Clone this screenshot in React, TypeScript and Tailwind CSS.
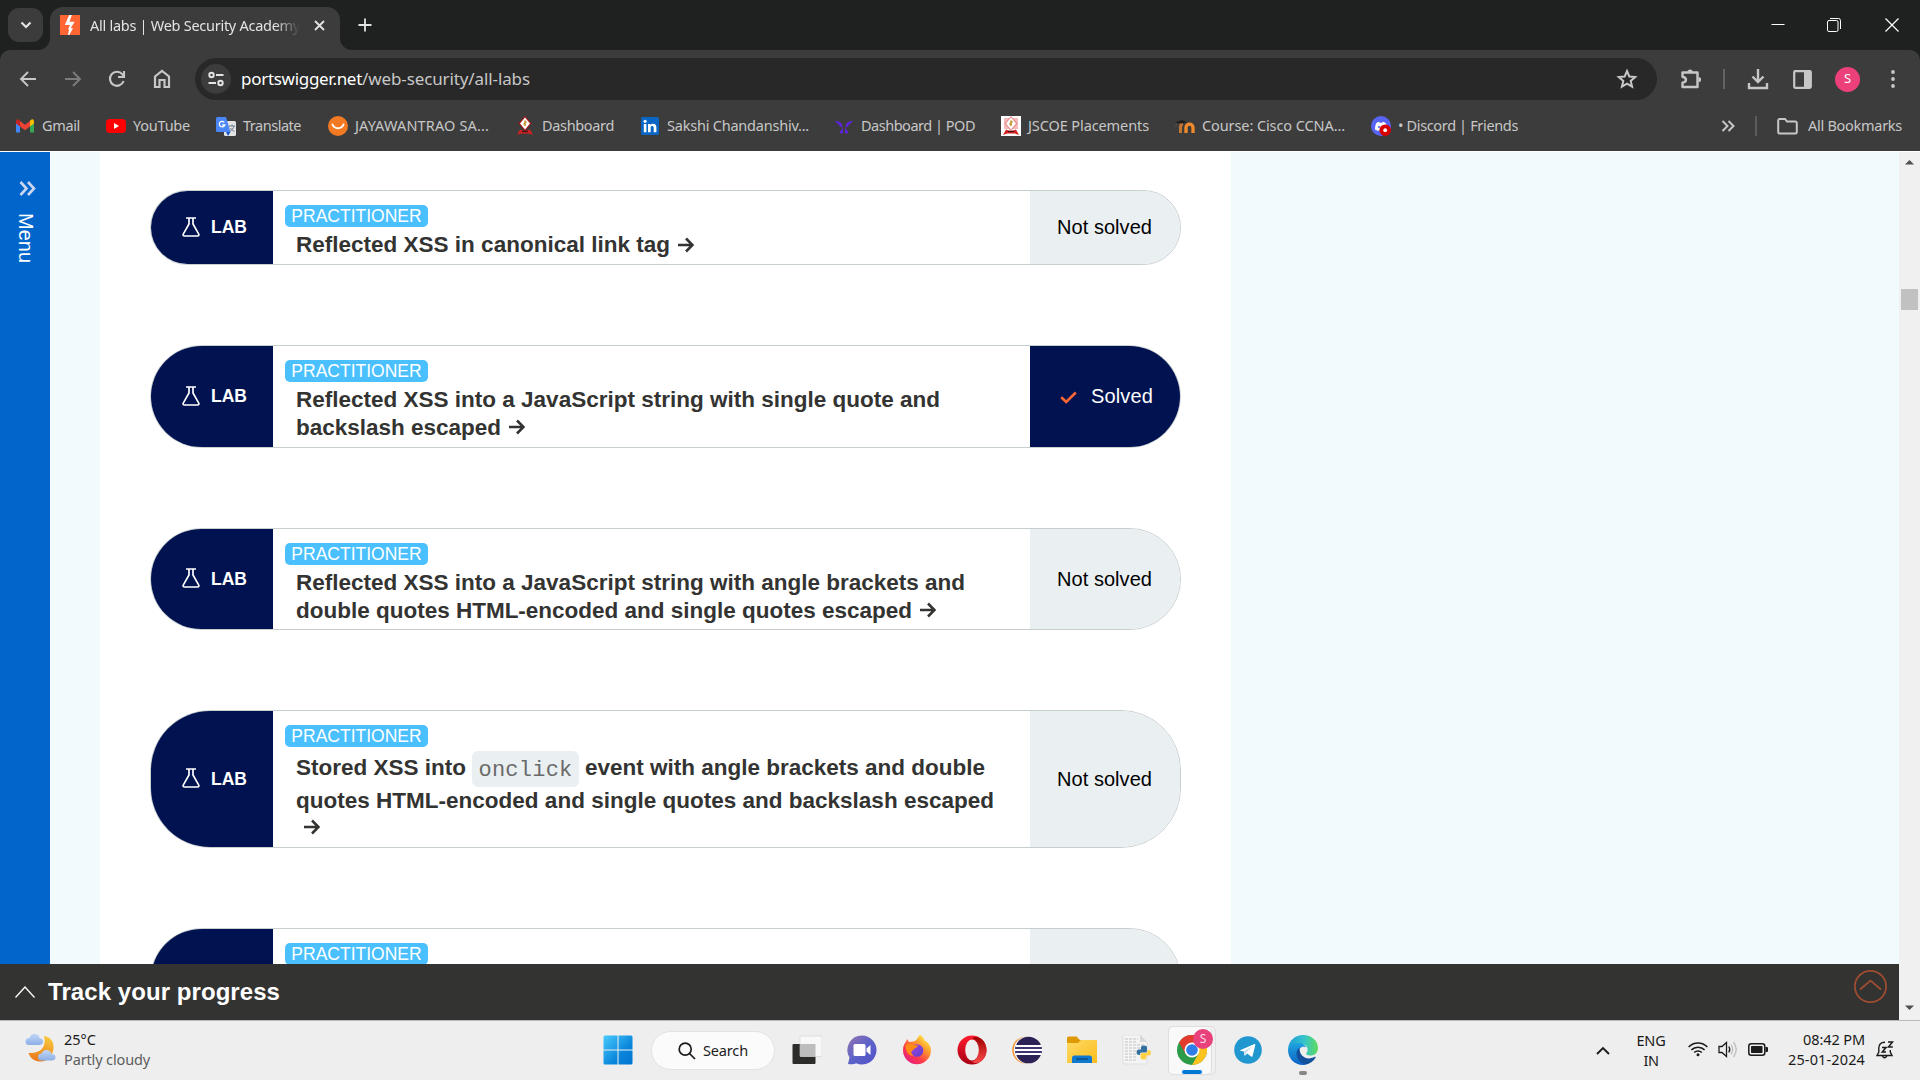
import React, { useLayoutEffect, useRef, useState } from "react";

const UI = "font-['Noto_Sans','Open_Sans',sans-serif]";
const ARIAL = "font-['Liberation_Sans',Arial,sans-serif]";

/** A single line of text whose tracking is adjusted to fill a given width. */
function Fit({ w, className = "", children }: { w: number; className?: string; children: string }) {
  const ref = useRef<HTMLSpanElement>(null);
  const [ls, setLs] = useState(0);
  useLayoutEffect(() => {
    const el = ref.current;
    if (!el) return;
    const natural = el.getBoundingClientRect().width;
    setLs((w - natural) / children.length);
  }, [w, children]);
  return (
    <span ref={ref} className={"inline-block shrink-0 whitespace-nowrap " + className} style={{ letterSpacing: ls + "px" }}>
      {children}
    </span>
  );
}

const Cell = ({ className = "", children }: { className?: string; children?: React.ReactNode }) => (
  <div className={"flex shrink-0 items-center justify-center " + className}>{children}</div>
);

function TabStrip() {
  return (
    <div className="flex h-[50px] bg-[#1f2120]">
      <Cell className="mt-2 ml-2 h-[34px] w-[35px] rounded-[11px] bg-[#3c3c3c]">
        <svg width="12" height="12" viewBox="0 0 12 12" fill="none" stroke="#e3e3e3" strokeWidth="2.2"><path d="M1.5 3.5 6 8l4.5-4.5" /></svg>
      </Cell>
      <div className="relative mt-[7px] ml-[7px] flex h-[43px] w-[290px] items-center rounded-t-[13px] bg-[#3c3c3c] pb-[7px] pl-[10px]">
        <svg className="absolute bottom-0 -left-3" width="12" height="12" viewBox="0 0 12 12" fill="#3c3c3c"><path d="M12 0v12H0A12 12 0 0 0 12 0Z" /></svg>
        <svg className="absolute -right-3 bottom-0" width="12" height="12" viewBox="0 0 12 12" fill="#3c3c3c"><path d="M0 0v12h12A12 12 0 0 1 0 0Z" /></svg>
        <svg width="20" height="20" viewBox="0 0 20 20"><rect width="20" height="20" fill="#ff6633" /><path d="M9.2 0h2.6L9.5 6.8h5.2L10.8 13l2.2.2L9.3 20H7.9l1.3-5.6H8l2-4.4H4.8Z" fill="#fff" /></svg>
        <div className="ml-[10px] w-[210px] overflow-hidden [mask-image:linear-gradient(90deg,#000_88%,transparent_100%)]">
          <Fit w={210} className="text-[14.5px] leading-[22px] text-[#e3e3e3]">All labs | Web Security Academy</Fit>
        </div>
        <svg className="ml-[14px]" width="11" height="11" viewBox="0 0 11 11" stroke="#e3e3e3" strokeWidth="1.800"><path d="m1 1 9 9M10 1l-9 9" /></svg>
      </div>
      <Cell className="w-[50px]">
        <svg width="14" height="14" viewBox="0 0 14 14" stroke="#e3e3e3" strokeWidth="1.800"><path d="M7 .5v13M.5 7h13" /></svg>
      </Cell>
      <div className="flex-1" />
      <Cell className="w-[57px]"><svg width="14" height="14" viewBox="0 0 14 14" stroke="#fff"><path d="M.5 6.5h13" /></svg></Cell>
      <Cell className="w-[57px] pr-px">
        <svg width="14" height="14" viewBox="0 0 14 14" fill="none" stroke="#fff"><rect x=".5" y="2.5" width="10.5" height="11" rx="1.5" /><path d="M3 .5h8.5a2 2 0 0 1 2 2v8.5" /></svg>
      </Cell>
      <Cell className="w-[57px]"><svg width="14" height="14" viewBox="0 0 14 14" stroke="#fff" strokeWidth="1.2"><path d="m.5.5 13 13M13.5.5l-13 13" /></svg></Cell>
    </div>
  );
}

function Toolbar() {
  return (
    <div className="bg-[#1f2120]">
      <div className="flex h-[58px] items-center rounded-t-[10px] bg-[#3c3c3c] pl-[6px]">
        <Cell className="w-[44.5px]"><svg width="18" height="18" viewBox="0 0 18 18" fill="none" stroke="#c7c7c7" strokeWidth="1.900"><path d="M17 9H2M9 2 2 9l7 7" /></svg></Cell>
        <Cell className="w-[44.5px]"><svg width="18" height="18" viewBox="0 0 18 18" fill="none" stroke="#7c7c7c" strokeWidth="1.900"><path d="M1 9h15M9 2l7 7-7 7" /></svg></Cell>
        <Cell className="w-[44.5px]">
          <svg width="18" height="18" viewBox="0 0 18 18" fill="none" stroke="#c7c7c7" strokeWidth="2.1"><path d="M15.6 11A7 7 0 1 1 14.4 4.4L16 6.2M16 1v6h-6" /></svg>
        </Cell>
        <Cell className="w-[44.5px]">
          <svg width="18" height="20" viewBox="0 0 18 20" fill="none" stroke="#c7c7c7" strokeWidth="2.2"><path d="M2 18V7.5L9 2l7 5.5V18h-4.500v-7h-5v7Z" /></svg>
        </Cell>
        <div className="ml-[11px] flex h-[42px] w-[1462px] items-center rounded-full bg-[#282828] pr-[19px] pl-[6px]">
          <Cell className="size-[30px] rounded-full bg-[#3c3c3c]">
            <svg width="16" height="16" viewBox="0 0 16 16" fill="none" stroke="#e3e3e3" strokeWidth="2"><circle cx="3.5" cy="4" r="2.2" /><path d="M8 4h7.5M.5 12H8" /><circle cx="12.5" cy="12" r="2.2" /></svg>
          </Cell>
          <div className="ml-[10px] flex text-[17px] leading-6 text-[#c7c7c7]">
            <Fit w={121} className="text-white">portswigger.net</Fit>
            <Fit w={168}>/web-security/all-labs</Fit>
          </div>
          <div className="flex-1" />
          <svg width="22" height="22" viewBox="0 0 22 22" fill="none" stroke="#c7c7c7" strokeWidth="2"><path d="m11 3 2.3 5.5 5.9.5-4.500 3.900 1.400 5.800L11 15.600l-5.100 3.100 1.400-5.800L2.800 9l5.900-.5Z" /></svg>
        </div>
        <Cell className="ml-[12px] w-[44px]">
          <svg width="22" height="22" viewBox="0 0 22 22" fill="none" stroke="#c7c7c7" strokeWidth="2.4" strokeLinejoin="round"><path d="M2.5 4.5h15v14.500h-15v-4.300c4.600-1 4.600-5.100 0-6Z" /><path d="M7.500 4a2.600 2.600 0 0 1 5.200 0ZM18.500 9a2.600 2.600 0 0 1 0 5.200Z" fill="#c7c7c7" stroke="none" /></svg>
        </Cell>
        <div className="ml-[10px] h-5 w-[2px] bg-[#636363]" />
        <Cell className="ml-[10px] w-[45px]">
          <svg width="22" height="22" viewBox="0 0 22 22" fill="none" stroke="#c7c7c7" strokeWidth="2.400"><path d="M11 1v12M5.500 8.500l5.500 5.500 5.500-5.500M2 15v5h18v-5" /></svg>
        </Cell>
        <Cell className="w-[45px]">
          <svg width="19" height="19" viewBox="0 0 19 19"><rect x="1.200" y="1.200" width="16.600" height="16.600" rx="1" fill="none" stroke="#c7c7c7" strokeWidth="2.200" /><path d="M11 1h7v17h-7Z" fill="#c7c7c7" /></svg>
        </Cell>
        <Cell className="size-[25px] mx-[10px] rounded-full bg-[#ec407a] text-[13px] text-white">S</Cell>
        <Cell className="w-[45px]">
          <svg width="4" height="20" viewBox="0 0 4 20" fill="#c7c7c7"><circle cx="2" cy="3" r="1.900" /><circle cx="2" cy="10" r="1.900" /><circle cx="2" cy="17" r="1.900" /></svg>
        </Cell>
      </div>
    </div>
  );
}

const GmailIcon = () => (
  <svg width="20" height="20" viewBox="0 0 20 20"><path d="M1 5v11.500h4V8Z" fill="#4285f4" /><path d="M15 8v8.500h4V5Z" fill="#34a853" /><path d="M15 4.500 17 3.200Q19 3 19 5.500v2L15 10.500Z" fill="#fbbc04" /><path d="M5 5v5.500l5 3.700 5-3.700V5l-5 3.700Z" fill="#ea4335" /><path d="M1 7.500v-2Q1 3 3 3.200L5 4.700v5.800Z" fill="#c5221f" /></svg>
);
const YouTubeIcon = () => (
  <svg width="20" height="20" viewBox="0 0 20 20"><rect y="3" width="20" height="14" rx="4" fill="#f00" /><path d="M8 7v6l5-3Z" fill="#fff" /></svg>
);
const TranslateIcon = () => (
  <svg width="20" height="20" viewBox="0 0 20 20"><rect x="8" y="5" width="12" height="15" rx="1.500" fill="#e3e3e3" /><path d="M1.500 1H10l4.500 15H1.500Q0 16 0 14.500v-12Q0 1 1.500 1Z" fill="#4a86f7" /><path d="m10 16 4.500 0L12 20Z" fill="#1a56c4" /><path d="M8.300 6.300A2.800 2.800 0 1 0 8.800 9H6.200" fill="none" stroke="#fff" strokeWidth="1.300" /><path d="M13 10h6M16 8.500V10M18 10c-.5 2.500-2 4-4 5M14.500 12c1 1.500 2 2.500 4 3.500" fill="none" stroke="#6c7a89" /></svg>
);
const SmileIcon = () => (
  <svg width="20" height="20" viewBox="0 0 20 20"><circle cx="10" cy="10" r="10" fill="#f37a22" /><path d="M4.500 8.500c2 5 9 5 11 0" fill="none" stroke="#fff" strokeWidth="1.900" strokeLinecap="round" /></svg>
);
const CrestIcon = ({ light = false }: { light?: boolean }) => (
  <svg width="20" height="20" viewBox="0 0 20 20">
    {light && <rect width="20" height="20" fill="#fff" />}
    {light && <path d="M3 2h14v11H3Z" fill="#f7b9b9" />}
    <path d="m10 0 6.500 7.500L10 15 3.500 7.500Z" fill={light ? "#e88a8a" : "#a81616"} />
    <path d="m10 1.500 5 6-5 6-5-6Z" fill="#fff" />
    <path d="M10 4.500v5.500M8.500 8.500l3-3" stroke="#c79b3b" strokeWidth="1.700" />
    <path d="M5 13.500q5 2.500 10 0l3 5.500-4-1.500H6L2 19Z" fill="#d32020" />
    <path d="M7 15.500h6" stroke="#401010" strokeWidth="1.200" />
  </svg>
);
const LinkedInIcon = () => (
  <svg width="20" height="20" viewBox="0 0 20 20"><rect x="1" y="1" width="18" height="18" rx="1.500" fill="#0a66c2" /><path d="M3.800 8h2.600v8.300H3.800ZM8 8h2.500v1.200c1.500-2.400 5.900-1.900 5.900 2v5.100h-2.700v-4.600c0-2.300-3-2.200-3 0v4.600H8Z" fill="#fff" /><circle cx="5.100" cy="5.300" r="1.600" fill="#fff" /></svg>
);
const PodIcon = () => (
  <svg width="20" height="20" viewBox="0 0 20 20" fill="#6023dd"><path d="M.5 5.500c4.500-1.200 8 1 8 6C5 11 5.500 7.500.5 5.500ZM19.500 5.500c-4.500-1.200-8 1-8 6 3.500-.5 3-4 8-6ZM9 11.500v5.500c-1.500 1-3.500.5-3-1 .2-1.500 2-2 3-4.500ZM11 11.500v5.500c1.500 1 3.500.5 3-1-.2-1.500-2-2-3-4.500Z" /></svg>
);
const MoodleIcon = () => (
  <svg width="20" height="20" viewBox="0 0 20 20" fill="none"><path d="M5.500 17v-6q0-3 2.500-3" stroke="#c57532" strokeWidth="3" /><path d="M11 17v-5.500c0-4.500 7-4.500 7 0V17" stroke="#f08a2c" strokeWidth="3.300" /><path d="M0 6.500 7 4l5 2-5 1.500Z" fill="#1d1d1d" /><path d="M1 7v4" stroke="#5a4a3c" /></svg>
);
const DiscordIcon = () => (
  <svg width="20" height="20" viewBox="0 0 20 20"><circle cx="10" cy="10" r="10" fill="#5865f2" /><path d="M4 13.500c0-4 1-6.500 2-7l2-.8.8 1h2.400l.8-1 2 .8c1 .5 2 3 2 7l-2.500 1.300H6.500Z" fill="#fff" /><circle cx="8" cy="11" r="1.100" fill="#5865f2" /><circle cx="14.200" cy="14.200" r="5.800" fill="#d90000" /><circle cx="14.200" cy="14.200" r="1.900" fill="#fff" /></svg>
);

const bookmarks = [
  { icon: <GmailIcon />, text: "Gmail", w: 38, next: 91 },
  { icon: <YouTubeIcon />, text: "YouTube", w: 57, next: 110 },
  { icon: <TranslateIcon />, text: "Translate", w: 58, next: 112 },
  { icon: <SmileIcon />, text: "JAYAWANTRAO SA...", w: 134, next: 187 },
  { icon: <CrestIcon />, text: "Dashboard", w: 72, next: 125 },
  { icon: <LinkedInIcon />, text: "Sakshi Chandanshiv...", w: 142, next: 194 },
  { icon: <PodIcon />, text: "Dashboard | POD", w: 114, next: 167 },
  { icon: <CrestIcon light />, text: "JSCOE Placements", w: 121, next: 174 },
  { icon: <MoodleIcon />, text: "Course: Cisco CCNA...", w: 143, next: 196 },
  { icon: <DiscordIcon />, text: "• Discord | Friends", w: 120, next: 200 },
];

function Bookmarks() {
  return (
    <div className="flex h-[43px] items-center bg-[#3c3c3c] pr-[18px] pb-[8px] pl-[15px] text-[14.5px] leading-5 text-[#c7c7c7]">
      {bookmarks.map((b, i) => (
        <div key={i} className="flex shrink-0 items-center" style={{ width: b.next }}>
          {b.icon}
          <Fit w={b.w} className="-mt-px ml-[7px]">{b.text}</Fit>
        </div>
      ))}
      <div className="flex-1" />
      <svg width="14" height="12" viewBox="0 0 14 12" fill="none" stroke="#c7c7c7" strokeWidth="2"><path d="m1.500 1 5 5-5 5M7.500 1l5 5-5 5" /></svg>
      <div className="ml-[20px] h-5 w-[2px] bg-[#5c5c5c]" />
      <svg className="mr-[10px] ml-[20px]" width="21" height="18" viewBox="0 0 21 18" fill="none" stroke="#c7c7c7" strokeWidth="2"><path d="M2.500 2H8l2 2.500h8.500Q19.800 4.500 19.800 6v9q0 1.500-1.300 1.500h-16Q1.200 16.500 1.200 15V3.500Q1.200 2 2.500 2Z" /></svg>
      <Fit w={94} className="-mt-px">All Bookmarks</Fit>
    </div>
  );
}

const Arrow = () => (
  <svg className="ml-[8px] shrink-0" width="16" height="16" viewBox="0 0 16 16" fill="none" stroke="#333332" strokeWidth="2.600"><path d="M0 8h14M8 1.500 14.500 8 8 14.500" /></svg>
);

function Lab({ h, solved = false, labels = true, children }: { h: string; solved?: boolean; labels?: boolean; children?: React.ReactNode }) {
  return (
    <div className={"flex w-[1031px] shrink-0 overflow-hidden rounded-[60px] border border-[#c8cfcf] bg-white " + h}>
      <div className="flex w-[122px] shrink-0 items-center bg-[#00124f] pl-[31px]">
        {labels && (
          <>
            <svg className="-mt-[2px]" width="18" height="20" viewBox="0 0 18 20" fill="none" stroke="#fff" strokeWidth="1.700"><path d="M4 1h10M7 1v6L1.200 17.200Q.8 19 2.500 19h13q1.700 0 1.300-1.800L11 7V1" /></svg>
            <Fit w={36} className="ml-[11px] text-[17.5px] font-bold text-white">LAB</Fit>
          </>
        )}
      </div>
      <div className="flex flex-1 flex-col pt-[14px] pl-3">
        <div className="h-[22px] w-[143px] rounded-[5px] bg-[#4bc0ff] text-center text-[17.5px] leading-[22px] text-white">PRACTITIONER</div>
        <div className="mt-1 pl-[11px] text-[22.5px] leading-[27.500px] font-bold whitespace-nowrap text-[#333332]">{children}</div>
      </div>
      {solved ? (
        <div className="flex w-[150px] items-center bg-[#00124f] pb-[2px] pl-[30px] text-white">
          <svg className="mt-[4px]" width="17" height="13" viewBox="0 0 17 13" fill="none" stroke="#ff6633" strokeWidth="2.600"><path d="m1.200 6.200 5 4.800L15.800 1.500" /></svg>
          <Fit w={62} className="ml-[14px] text-[20px]">Solved</Fit>
        </div>
      ) : (
        <div className="flex w-[150px] items-center bg-[#eaeff2] pb-px pl-[27px] text-black">
          {labels && <Fit w={95} className="text-[20px]">Not solved</Fit>}
        </div>
      )}
    </div>
  );
}

const Line = ({ w, arrow = false, children }: { w: number; arrow?: boolean; children: string }) => (
  <div className="flex items-center">
    <Fit w={w}>{children}</Fit>
    {arrow && <Arrow />}
  </div>
);

function Page() {
  return (
    <div className={"flex h-[869px] pt-px " + ARIAL}>
      <div className="flex w-[1899px] flex-col">
        <div className="flex h-[812px] overflow-hidden bg-[#f1fafc]">
          <div className="flex w-[50px] shrink-0 flex-col items-center bg-[#0066cc] pt-[29px] pl-[4px]">
            <svg width="17" height="15" viewBox="0 0 17 15" fill="none" stroke="#ccd6ee" strokeWidth="2.600"><path d="m1.500 1 6 6.500-6 6.500M9 1l6 6.500L9 14" /></svg>
            <span className="mt-[17px] mr-[2px] text-[20px] leading-6 text-white [writing-mode:vertical-rl]">Menu</span>
          </div>
          <div className="ml-[50px] flex w-[1131px] shrink-0 flex-col gap-20 bg-white pt-[38px] pl-[50px]">
            <Lab h="h-[75px]">
              <Line w={374} arrow>Reflected XSS in canonical link tag</Line>
            </Lab>
            <Lab h="h-[103px]" solved>
              <Line w={644} >Reflected XSS into a JavaScript string with single quote and</Line>
              <Line w={205} arrow>backslash escaped</Line>
            </Lab>
            <Lab h="h-[102px]">
              <Line w={669}>Reflected XSS into a JavaScript string with angle brackets and</Line>
              <Line w={616} arrow>double quotes HTML-encoded and single quotes escaped</Line>
            </Lab>
            <Lab h="h-[138px]">
              <div className="flex h-[35.500px] items-center">
                <Fit w={170} className="-mt-[3px]">Stored XSS into</Fit>
                <div className="ml-[6px] flex h-[36px] w-[107px] items-center justify-center rounded-[6px] bg-[#eaeff2] pt-[3px] font-['Liberation_Mono',monospace] text-[22px] font-normal text-[#6a6a69]"><Fit w={94}>onclick</Fit></div>
                <Fit w={400} className="-mt-[3px] ml-[6px]">event with angle brackets and double</Fit>
              </div>
              <Line w={698}>quotes HTML-encoded and single quotes and backslash escaped</Line>
              <div className="flex h-[26px] items-center"><Arrow /></div>
            </Lab>
            <Lab h="h-[103px]" labels={false} />
          </div>
        </div>
        <div className="flex h-[56px] items-center bg-[#333332] pl-[15px]">
          <svg width="20" height="12" viewBox="0 0 20 12" fill="none" stroke="#fff" strokeWidth="1.300"><path d="M.5 11.500 10 1l9.500 10.500" /></svg>
          <Fit w={232} className="ml-[13px] text-[24px] font-bold text-white">Track your progress</Fit>
          <div className="flex-1" />
          <svg className="mr-[12px] mb-[12px]" width="33" height="33" viewBox="0 0 33 33" fill="none" stroke="#a14d31" strokeWidth="1.700"><circle cx="16.500" cy="16.500" r="15.600" /><path d="m6 19.500 10.500-9 10.500 9" /></svg>
        </div>
      </div>
      <div className="flex w-[21px] flex-col items-center bg-[#f0f0f0]">
        <svg className="mt-[7px]" width="9" height="6" viewBox="0 0 9 6" fill="#505050"><path d="M0 5.500h9L4.500 1Z" /></svg>
        <div className="mt-[124px] h-[21px] w-[17px] bg-[#c1c1c1]" />
        <div className="flex-1" />
        <svg className="mb-[9px]" width="9" height="6" viewBox="0 0 9 6" fill="#505050"><path d="M0 .5h9L4.500 5Z" /></svg>
      </div>
    </div>
  );
}

const WindowsLogo = () => (
  <svg width="30" height="30" viewBox="0 0 30 30">
    <defs><linearGradient id="win" x1="0" y1="0" x2="30" y2="30" gradientUnits="userSpaceOnUse"><stop stopColor="#4ccdfd" /><stop offset=".6" stopColor="#0b87dc" /><stop offset="1" stopColor="#0072cf" /></linearGradient></defs>
    <path d="M2 .5h12.500v14H.5V2Q.5.500 2 .5ZM15.500.5H28q1.500 0 1.500 1.500v12.500h-14ZM.5 15.500h14v14H2Q.5 29.500.5 28ZM15.500 15.500h14V28q0 1.500-1.500 1.500H15.500Z" fill="url(#win)" />
  </svg>
);
const TaskView = () => (
  <svg width="30" height="30" viewBox="0 0 30 30"><rect x=".5" y="9" width="23" height="20" rx="1" fill="#2c2c2a" /><rect x="8" y="1" width="22" height="20.500" rx="1" fill="#f8f8f8" stroke="#d2d2d2" strokeWidth=".6" /><path d="M8 9h15.500v12.500H8Z" fill="#bdbdbd" /></svg>
);
const Chat = () => (
  <svg width="30" height="30" viewBox="0 0 30 30">
    <defs><linearGradient id="chat" x1="0" y1="0" x2="1" y2="1"><stop stopColor="#9474b0" /><stop offset=".5" stopColor="#5c63c8" /><stop offset="1" stopColor="#5050c8" /></linearGradient></defs>
    <path d="M15 .5a14.500 14.500 0 1 1-6 27.700c-2 1.300-5 1.300-8 .8l1.500-6.500A14.500 14.500 0 0 1 15 .5Z" fill="url(#chat)" /><rect x="6.500" y="9" width="12" height="12" rx="1.500" fill="#fff" /><path d="m19.500 13.500 4-3.500v10l-4-3.500Z" fill="#fff" />
  </svg>
);
const Firefox = () => (
  <svg width="30" height="30" viewBox="0 0 30 30">
    <defs>
      <linearGradient id="ff" x1="1" y1="0" x2=".2" y2="1"><stop offset=".1" stopColor="#fff14f" /><stop offset=".4" stopColor="#ff9a2c" /><stop offset=".7" stopColor="#ff3a4a" /><stop offset="1" stopColor="#e01b87" /></linearGradient>
      <linearGradient id="ffp" x1="0" y1="0" x2="1" y2="1"><stop stopColor="#a04ae0" /><stop offset="1" stopColor="#5b3ccc" /></linearGradient>
    </defs>
    <path d="M18.500 0c2.500 2 3.500 3.500 4 5.500 4 2 6.500 5.500 6.500 10A14 14 0 1 1 1 15c0-3.500 1-6 3-8.500l1-2.500 2 3 4-.5c2 0 3.500-1.500 4.500-3.500.8-1.500 1.500-3 3-3Z" fill="url(#ff)" />
    <circle cx="15" cy="15.500" r="6.300" fill="url(#ffp)" />
    <path d="M3.500 10c3-2 6-1.500 8 0l4.500.5c-.5 2.500-4 2.500-4.500 4.500-3 .5-3 4.500.5 5.500-5 1-8.500-3-8.500-10.500Z" fill="#ff8a16" />
  </svg>
);
const Opera = () => (
  <svg width="30" height="30" viewBox="0 0 30 30">
    <defs><linearGradient id="op" x1="0" y1="0" x2="0" y2="1"><stop stopColor="#ff1b2d" /><stop offset="1" stopColor="#a70014" /></linearGradient><linearGradient id="op2" x1="0" y1="0" x2="0" y2="1"><stop stopColor="#9c0000" /><stop offset="1" stopColor="#ff4b4b" /></linearGradient></defs>
    <circle cx="15" cy="15" r="14.500" fill="url(#op)" /><path d="M15 3.500C20 -1 29.500 5 29.500 15S20 31 15 26.500c8 0 8-23 0-23Z" fill="url(#op2)" /><ellipse cx="15" cy="15" rx="6.800" ry="10.500" fill="#eee" />
  </svg>
);
const Eclipse = () => (
  <svg width="30" height="30" viewBox="0 0 30 30"><circle cx="13.500" cy="15" r="13.300" fill="#f7942a" /><circle cx="15.200" cy="15" r="13.500" fill="#eee" /><circle cx="16.500" cy="15" r="13.300" fill="#2c2255" /><path d="M3.500 11h26.200M3 15h27M3.500 19h26.200" stroke="#fff" strokeWidth="2" /><path d="M3 13h26.800M3 17h26.800" stroke="#463c80" strokeWidth="1.500" /></svg>
);
const Folder = () => (
  <svg width="30" height="30" viewBox="0 0 30 30">
    <defs><linearGradient id="fo" x1="0" y1="0" x2="1" y2="1"><stop stopColor="#ffda66" /><stop offset="1" stopColor="#fbbc1c" /></linearGradient></defs>
    <path d="M0 3q0-1.500 1.500-1.500h8L13 5h6v5H0Z" fill="#dd9a05" /><path d="M0 8h11l3-3h15q1 0 1 1v22H0Z" fill="url(#fo)" /><path d="M5 28v-5q0-2.500 2.500-2.500h15Q25 20.500 25 23v5Z" fill="#0f78cf" /><path d="M9 24h12" stroke="#0a4c86" strokeWidth="1.500" />
  </svg>
);
const PythonFile = () => (
  <svg width="30" height="30" viewBox="0 0 30 30"><path d="M1 0h17l7 7v22H1Z" fill="#f4f4f4" stroke="#d8d8d8" strokeWidth=".7" /><path d="M18 0v7h7Z" fill="#dadada" /><path d="M3 4h13M3 7h12M3 10h19M3 13h19M3 16h12M3 19h12M3 22h12M3 25h12" stroke="#c4c4c4" strokeDasharray="3 1" /><path d="M19 15v-2.500q0-2 3-2t3 2V16q0 1.500-1.500 1.500h-4Q18 17.500 18 19v1h-1.500q-2 0-2-2.700T16.500 14.500H22" fill="#33709f" /><path d="M24.500 20v2.500q0 2-3 2t-3-2V19.500q0-1.500 1.500-1.500h4q1.500 0 1.500-1.500V15H27q2 0 2 2.700T27 20.500h-3" fill="#ffd245" /></svg>
);
const Chrome = () => (
  <svg width="30" height="30" viewBox="0 0 30 30"><circle cx="15" cy="15" r="15" fill="#2b9b49" /><path d="M28 7.500A15 15 0 0 1 15 30l6.500-11.200L15 15V7.500Z" fill="#fcc31e" /><path d="M2 7.500 8.500 18.800 15 15V7.500h13A15 15 0 0 0 2 7.500Z" fill="#e33b2e" /><circle cx="15" cy="15" r="7.500" fill="#fff" /><circle cx="15" cy="15" r="5.800" fill="#2f7de9" /></svg>
);
const Telegram = () => (
  <svg width="28" height="28" viewBox="0 0 28 28"><circle cx="14" cy="14" r="13.800" fill="#2197d0" /><path d="M5.500 14.500 20.500 8q1-.2.8 1L18.600 20q-.4 1-1.500.4l-4-3-2 2q-.7.500-.8-.4l-.5-3.500Z" fill="#fff" /><path d="m10 15.500 8-5-6 6-1 3Z" fill="#b8d8ea" /></svg>
);
const Edge = () => (
  <svg width="30" height="30" viewBox="0 0 30 30">
    <defs>
      <linearGradient id="ed1" x1="0" y1=".5" x2="1" y2=".5"><stop stopColor="#1c9bd9" /><stop offset=".55" stopColor="#36c4c9" /><stop offset="1" stopColor="#5fdc5a" /></linearGradient>
      <linearGradient id="ed2" x1="0" y1="0" x2="0" y2="1"><stop stopColor="#1ea3e0" /><stop offset="1" stopColor="#0f62c4" /></linearGradient>
    </defs>
    <path d="M0 14C1 5 7.500 0 15 0c9 0 15 6 15 13 0 5-3.500 7.500-7.500 7.500-3 0-5-1-4-2.500 3-4 0-9-6-9-6 0-11 1-12.500 5Z" fill="url(#ed1)" />
    <path d="M0 15c0-4 4.500-7 9.500-7 5 0 7.500 2 8.500 4.500-4-2-7.500 1-7.500 6 0 5 3 9 7 11.200C8.500 31.500 0 24.500 0 15Z" fill="url(#ed2)" />
    <path d="M11.500 12.800C6 16 8 27 17.500 29.800c4-.8 8-3.300 10-7 .4-.8-.3-1.200-1-.8-7 3.500-15 .5-15-9.200Z" fill="#124f9c" />
  </svg>
);

function Weather() {
  return (
    <svg width="32" height="30" viewBox="0 0 32 30">
      <defs><linearGradient id="moon" x1=".7" y1="0" x2=".4" y2="1"><stop stopColor="#f8c93c" /><stop offset="1" stopColor="#ec7a1c" /></linearGradient><linearGradient id="cl" x1="0" y1="0" x2="0" y2="1"><stop stopColor="#c4d8f8" /><stop offset="1" stopColor="#8caee6" /></linearGradient></defs>
      <path d="M19 3c7 1 10 6 9.500 12C28 23 22 29 15 28.500 9 28 5 25 3.500 20 15 21 22 14 19 3Z" fill="url(#moon)" />
      <path d="M4.500 12Q.5 12 .5 8.500T4.500 5Q6 .5 10 .8T14.500 5q3.500.5 3.500 3.500T14.500 12Z" fill="url(#cl)" />
      <path d="M17 27.500q-4 0-4-3.500t3.500-3.500Q18 16.500 22 17t4.500 4q4 0 4 3.200t-4 3.300Z" fill="url(#cl)" />
    </svg>
  );
}

function Taskbar() {
  return (
    <div className="flex h-[60px] border-t border-[#bababa] bg-[#eeeeee] text-[14.500px] leading-5 text-[#1b1b1b]">
      <div className="flex w-[591px] items-start pl-[25px]">
        <div className="mt-[12px]"><Weather /></div>
        <div className="mt-[8px] ml-[7px] flex flex-col items-start">
          <Fit w={32}>25°C</Fit>
          <Fit w={86} className="text-[#5d5d5d]">Partly cloudy</Fit>
        </div>
      </div>
      <div className="flex pb-px">
        <Cell className="w-[55px] pr-px"><WindowsLogo /></Cell>
        <Cell className="mt-[10px] ml-[5px] h-[39px] w-[124px] rounded-full border border-[#e2e2e2] bg-[#fbfbfb]">
          <svg width="18" height="18" viewBox="0 0 18 18" fill="none" stroke="#1b1b1b" strokeWidth="1.700"><circle cx="7.200" cy="7.200" r="6" /><path d="m11.500 11.500 5.500 5.500" /></svg>
          <Fit w={45} className="-mt-px ml-[7px]">Search</Fit>
        </Cell>
        <Cell className="ml-[4px] w-[55px]"><TaskView /></Cell>
        <Cell className="w-[55px]"><Chat /></Cell>
        <Cell className="w-[55px]"><Firefox /></Cell>
        <Cell className="w-[55px]"><Opera /></Cell>
        <Cell className="w-[55px]"><Eclipse /></Cell>
        <Cell className="w-[55px]"><Folder /></Cell>
        <Cell className="w-[55px]"><PythonFile /></Cell>
        <div className="relative mt-[5px] ml-[4px] h-[49px] w-[48px] rounded-[5px] border border-[#dedede] bg-[#f0f0f0]">
          <div className="flex h-full w-[43px] flex-col items-center rounded-[5px] border-r border-[#dcdcdc] bg-[#f9f9f9] pt-[8px] pl-[4px]">
            <Chrome />
            <div className="mt-[5px] h-1 w-5 rounded-full bg-[#0078d4]" />
          </div>
          <Cell className="absolute top-[2px] right-[2px] size-[20px] rounded-full bg-[#e8417b] text-[12px] text-[#ffd9e6]">S</Cell>
        </div>
        <Cell className="ml-[4px] w-[55px]"><Telegram /></Cell>
        <div className="relative flex w-[55px] items-center justify-center">
          <Edge />
          <div className="absolute bottom-[4px] h-1 w-2 rounded-full bg-[#868686]" />
        </div>
      </div>
      <div className="flex-1" />
      <Cell className="w-[30px]"><svg width="14" height="9" viewBox="0 0 14 9" fill="none" stroke="#1b1b1b" strokeWidth="1.900"><path d="m1 8 6-6 6 6" /></svg></Cell>
      <div className="mt-[9px] ml-[11px] flex w-[44px] flex-col items-center"><Fit w={29}>ENG</Fit><Fit w={15}>IN</Fit></div>
      <svg className="mt-[20px] ml-[15px]" width="20" height="16" viewBox="0 0 20 16" fill="none" stroke="#1b1b1b" strokeWidth="1.500"><path d="M.6 6a13 13 0 0 1 18.800 0M3.400 8.900a9.300 9.300 0 0 1 13.200 0M6.200 11.600a5.300 5.300 0 0 1 7.600 0" /><circle cx="10" cy="13.700" r="1.500" fill="#1b1b1b" stroke="none" /></svg>
      <svg className="mt-[20px] ml-[10px]" width="20" height="17" viewBox="0 0 20 17" fill="none" stroke="#1b1b1b" strokeWidth="1.300"><path d="M1 5.500h3L8.500 1.500v14L4 11.500H1ZM10.800 5.500q2 3 0 6" /><path d="M13 3.500q3.500 5 0 10M15.500 1q5.500 7.500 0 15" stroke="#bdbdbd" /></svg>
      <svg className="mt-[22px] ml-[10px]" width="20" height="13" viewBox="0 0 20 13"><rect x=".8" y=".8" width="16" height="11.400" rx="2.500" fill="none" stroke="#1b1b1b" strokeWidth="1.500" /><rect x="3" y="3" width="11.500" height="7" rx=".8" fill="#1b1b1b" /><path d="M17.500 4H19q1 0 1 1v3q0 1-1 1h-1.500Z" fill="#1b1b1b" /></svg>
      <div className="mt-[8px] flex w-[97px] flex-col items-end"><Fit w={62}>08:42 PM</Fit><Fit w={77}>25-01-2024</Fit></div>
      <svg className="mt-[20px] mr-[26px] ml-[11px]" width="18" height="18" viewBox="0 0 18 18" fill="none" stroke="#1b1b1b" strokeWidth="1.400"><path d="M9 1.200C5 1 2.800 3.700 2.800 7v4L1 14.500h15L14.300 11V9M6.300 14.800q2.200 3.800 4.600 0" /><path d="M6 6.500h4L6.300 11H10M12 1h4.500l-4 5h4.300" strokeWidth="1.500" /></svg>
    </div>
  );
}

export default function App() {
  return (
    <div className={"flex h-[1080px] w-[1920px] flex-col overflow-hidden bg-white " + UI}>
      <TabStrip />
      <Toolbar />
      <Bookmarks />
      <Page />
      <Taskbar />
    </div>
  );
}
